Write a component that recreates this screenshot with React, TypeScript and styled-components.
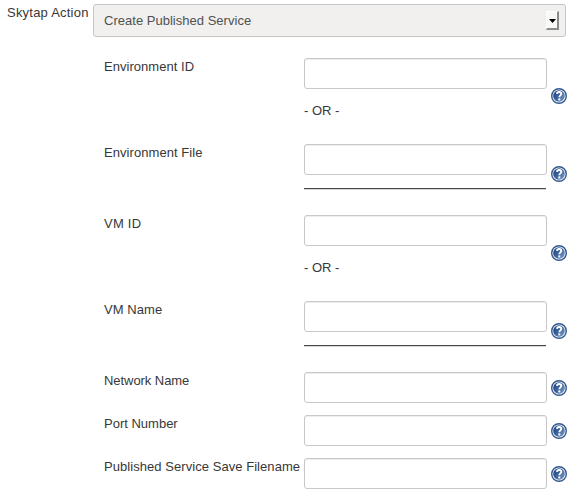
import React from "react";
import styled, { createGlobalStyle } from "styled-components";

const GlobalStyle = createGlobalStyle`
  body {
    margin: 0;
    background: #fff;
    color: #383838;
    font: 13px/18px "Liberation Sans", Arial, Helvetica, sans-serif;
  }
  * { box-sizing: border-box; }
`;

const Form = styled.form`
  width: 575px;
  height: 495px;
  padding: 4px 0 0 7px;
  overflow: hidden;
`;

const ActionRow = styled.div`
  display: flex;
  align-items: flex-start;
  height: 54px;
`;

const ActionLabel = styled.span`
  width: 86px;
  letter-spacing: 0.22px;
  white-space: nowrap;
`;

const Text = styled.span<{ $spacing?: number }>`
  letter-spacing: ${(p) => p.$spacing ?? 0}px;
  white-space: nowrap;
`;

const Select = styled.div`
  display: flex;
  align-items: center;
  justify-content: space-between;
  width: 473px;
  height: 33px;
  padding: 0 6px 0 10px;
  border: 1px solid #c6c6c6;
  border-radius: 3px;
  background: #f1f0ef;
  color: #505050;
`;

const Arrow = styled.span`
  display: flex;
  align-items: center;
  justify-content: center;
  width: 13px;
  height: 19px;
  padding-top: 2px;
  border: 1px solid #fff;
  border-right: 2px solid #8c8c8c;
  border-bottom: 2px solid #8c8c8c;
  background: #f9f9f8;
`;

const Fields = styled.div`
  padding-left: 97px;
`;

const FieldRow = styled.div<{ $height: number; $gap: number }>`
  display: grid;
  grid-template-columns: 200px 247px 16px;
  height: ${(p) => p.$height}px;
  margin-bottom: ${(p) => p.$gap}px;
`;

const Control = styled.div`
  display: flex;
  flex-direction: column;
  width: 243px;
`;

const Input = styled.input`
  width: 243px;
  height: 31px;
  flex: none;
  margin: 0;
  padding: 4px 8px;
  border: 1px solid #c8c8c8;
  border-radius: 3px;
  background: #fff;
  box-shadow: inset 0 1px 1px rgba(0, 0, 0, 0.075);
  font: inherit;
  outline: none;
`;

const Or = styled.span`
  margin-top: 13px;
`;

const Rule = styled.hr`
  width: 242px;
  height: 1px;
  margin: 13px 0 0;
  border: 0;
  background: #484848;
  box-shadow: 0 1px 0 #d6d6d6;
`;

const HelpIcon = styled.svg`
  display: block;
  align-self: center;
`;

type Field = { label: string; spacing?: number; after?: "or" | "rule" };

const fields: Field[] = [
  { label: "Environment ID", after: "or", spacing: 0.04 },
  { label: "Environment File", after: "rule", spacing: 0.06 },
  { label: "VM ID", after: "or", spacing: 0.25 },
  { label: "VM Name", after: "rule", spacing: 0.07 },
  { label: "Network Name", spacing: -0.06 },
  { label: "Port Number" },
  { label: "Published Service Save Filename", spacing: 0.055 },
];

function Help() {
  return (
    <HelpIcon width="16" height="16" viewBox="0 0 16 16" aria-label="Help">
      <defs>
        <linearGradient id="helpFill" x1="0" y1="0.2" x2="1" y2="0.8">
          <stop offset="0" stopColor="#1d4580" />
          <stop offset="0.5" stopColor="#41689f" />
          <stop offset="1" stopColor="#7595c2" />
        </linearGradient>
      </defs>
      <circle cx="8" cy="8" r="7.3" fill="#eef3f9" stroke="#34598f" strokeWidth="1.4" />
      <circle cx="8" cy="8" r="5.8" fill="url(#helpFill)" />
      <path
        d="M5.9 5.9C6 4.6 6.8 4 8.1 4c1.4 0 2.2.6 2.2 1.8 0 1.6-2 1.6-2 3.5"
        fill="none"
        stroke="#fff"
        strokeWidth="1.8"
      />
      <rect x="7.3" y="10.4" width="2" height="2" fill="#fff" />
    </HelpIcon>
  );
}

export default function App() {
  return (
    <Form>
      <GlobalStyle />
      <ActionRow>
        <ActionLabel>Skytap Action</ActionLabel>
        <Select role="combobox" aria-label="Skytap Action">
          <Text $spacing={0.02}>Create Published Service</Text>
          <Arrow>
            <svg width="7" height="4" viewBox="0 0 7 4">
              <path d="M0 0h7L3.5 4z" fill="#000" />
            </svg>
          </Arrow>
        </Select>
      </ActionRow>
      <Fields>
        {fields.map((f) => (
          <FieldRow
            key={f.label}
            $height={f.after === "or" ? 76 : f.after === "rule" ? 60 : 32}
            $gap={f.after === "or" ? 10 : 11}
          >
            <Text $spacing={f.spacing}>{f.label}</Text>
            <Control>
              <Input aria-label={f.label} />
              {f.after === "or" && <Or>- OR -</Or>}
              {f.after === "rule" && <Rule />}
            </Control>
            <Help />
          </FieldRow>
        ))}
      </Fields>
    </Form>
  );
}
